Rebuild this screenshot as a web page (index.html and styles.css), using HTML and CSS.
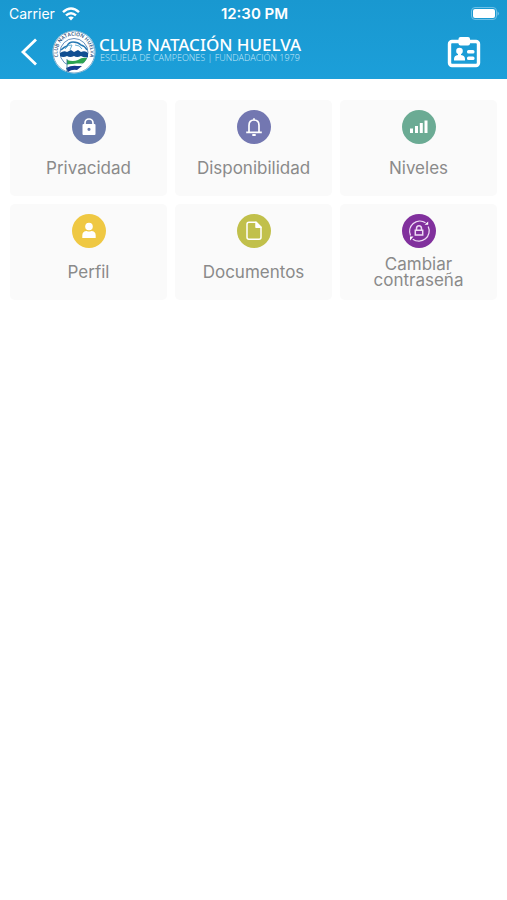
FILE: index.html
```html
<!DOCTYPE html>
<html lang="es">
<head>
<meta charset="utf-8">
<meta name="viewport" content="width=device-width, initial-scale=1">
<title>Club Natación Huelva</title>
<link rel="stylesheet" href="styles.css">
</head>
<body>
<header class="header">
  <div class="status">
    <div class="carrier">
      <span>Carrier</span>
      <svg width="18" height="14" viewBox="0 0 18 14" fill="none" stroke="currentColor" stroke-width="2.5" aria-hidden="true">
        <path d="M1 5.200Q9-2.200 17 5.200M4 8.400q5-4.400 10 0"/>
        <path d="M9 13.400 6.200 10.600q2.800-2.200 5.600 0z" fill="currentColor" stroke="none"/>
      </svg>
    </div>
    <time class="clock">12:30 PM</time>
    <svg class="battery" width="30" height="14" viewBox="0 0 30 14" aria-hidden="true">
      <rect x="1.500" y=".5" width="25" height="12" rx="3.500" fill="none" stroke="#6cc0e6"/>
      <rect x="3" y="2" width="22" height="9" rx="2" fill="#fff"/>
      <path d="M27.500 4.200q3 2.300 0 4.600z" fill="#6cc0e6"/>
    </svg>
  </div>
  <div class="bar">
    <button class="back" type="button" aria-label="Atrás">
      <svg width="18" height="28" viewBox="0 0 18 28" fill="none" stroke="currentColor" stroke-width="2.800" aria-hidden="true"><path d="M16 1.500 3 14l13 12.500"/></svg>
    </button>
    <a class="brand" href="#">
      <svg class="crest" width="44" height="44" viewBox="0 0 44 44" aria-hidden="true">
        <defs><path id="ring" d="M7.200 29.500A16.500 16.500 0 1 1 36.800 29.500"/></defs>
        <circle cx="22" cy="22" r="21.500" fill="#fff"/>
        <circle cx="22" cy="22" r="21" fill="none" stroke="#3a86b8" stroke-width=".7"/>
        <text class="crest-text"><textPath href="#ring" startOffset="50%">CLUB NATACIÓN HUELVA</textPath></text>
        <circle cx="22" cy="22.500" r="14" fill="#fff" stroke="#3d72ac" stroke-width=".8"/>
        <path d="M9 20q3-3 6-4 2-4 6-4 5 0 8 3 4 1 6 5" fill="none" stroke="#2879b3" stroke-width="1.500"/>
        <path d="M13 19q3-5 7-4l-2 5M23 15q5 0 7 4" fill="none" stroke="#67afd4"/>
        <path d="M8 23q4-3 7-1l4-2 3 2 4-2 3 2q4-2 7 1v4q-4 1-7-1-4 2-7 0-4 2-7 0-4 2-7 0z" fill="#124f92"/>
        <path d="M15 30q6 2 11 0 4-3 9-2-2 5-6 6-7-1-14 1z" fill="#2ca350"/>
        <path d="M14 34.500q6 0 11-1l6 0-4 3q-5-1-12 1z" fill="#fff"/>
        <path d="M14 38q6-3 11-2l5 0-5 4q-5-1-9 2z" fill="#173d8f"/>
        <path d="M15 29v13" stroke="#276992" stroke-width=".8"/>
      </svg>
      <span class="names">
        <span class="club">CLUB NATACIÓN HUELVA</span>
        <span class="motto">ESCUELA DE CAMPEONES | FUNDADACIÓN 1979</span>
      </span>
    </a>
    <button class="card-id" type="button" aria-label="Carné">
      <svg width="34" height="32" viewBox="0 0 34 32" fill="currentColor" aria-hidden="true">
        <rect x="2.500" y="5.500" width="29" height="24" rx="2.500" fill="none" stroke="currentColor" stroke-width="3.400"/>
        <rect x="11.500" y="1" width="11.500" height="8.500" rx="2"/>
        <circle cx="12.500" cy="15" r="3.300"/>
        <path d="M11 16h3v3q4 .6 4 4v1.500H7V23q0-3.400 4-4z"/>
        <rect x="20" y="14" width="7.500" height="3.500" rx="1.500"/>
        <rect x="20" y="20.500" width="7.500" height="3.500" rx="1.500"/>
      </svg>
    </button>
  </div>
</header>
<main class="grid">
  <a class="tile" href="#">
    <svg class="icon privacy" viewBox="0 0 34 34" aria-hidden="true">
      <path d="M13 15.500v-2.500a4 4 0 0 1 8 0v2.500" fill="none" stroke="#fff" stroke-width="1.700"/>
      <path fill="#fff" fill-rule="evenodd" d="M11.500 14h11q1 0 1 1v9q0 1-1 1h-11q-1 0-1-1v-9q0-1 1-1zM17 17.700a1.600 1.600 0 1 0 0 3.200 1.600 1.600 0 0 0 0-3.200z"/>
    </svg>
    <span class="label">Privacidad</span>
  </a>
  <a class="tile" href="#">
    <svg class="icon availability" viewBox="0 0 34 34" fill="none" stroke="#fff" stroke-width="1.700" aria-hidden="true">
      <path d="M9.200 22.300h15.600M12 22v-6.500q0-5.500 5-5.500t5 5.500V22M17 10V8.300"/>
      <path d="M15.300 25h3.400" stroke-width="2"/>
    </svg>
    <span class="label">Disponibilidad</span>
  </a>
  <a class="tile" href="#">
    <svg class="icon levels" viewBox="0 0 34 34" fill="#fff" aria-hidden="true">
      <path d="M8 18.500h3V23H8zM13 16h3v7h-3zM17.800 13h3v10h-3zM22.500 10.500h3V23h-3z"/>
    </svg>
    <span class="label">Niveles</span>
  </a>
  <a class="tile" href="#">
    <svg class="icon profile" viewBox="0 0 34 34" fill="#fff" aria-hidden="true">
      <circle cx="17" cy="12.500" r="3.800"/>
      <path d="M10.300 24v-2.500q0-4.500 4.500-4.500 2.200 1.200 4.400 0 4.500 0 4.500 4.500V24z"/>
    </svg>
    <span class="label">Perfil</span>
  </a>
  <a class="tile" href="#">
    <svg class="icon documents" viewBox="0 0 34 34" fill="none" stroke="#fff" stroke-width="1.500" stroke-linejoin="round" aria-hidden="true">
      <path d="M19 8.300h-7q-2 0-2 2v13q0 2 2 2h10q2 0 2-2v-10z"/>
      <path d="M19 8.300v5h5z" fill="#fff"/>
    </svg>
    <span class="label">Documentos</span>
  </a>
  <a class="tile" href="#">
    <svg class="icon password" viewBox="0 0 34 34" fill="none" stroke="#eedbf5" stroke-width="1.300" aria-hidden="true">
      <path d="M8.500 21.500A10.300 10.300 0 0 1 23.500 8.700M26.200 12.500A10.300 10.300 0 0 1 10.800 25.200"/>
      <path d="M22.500 10.800h3.700V7.500zM8 26.500v-4h3.500z" fill="#fff" stroke="none"/>
      <path d="M13.300 16.300h7.400v4.700h-7.400zM14.500 16v-1.500a2.500 2.800 0 0 1 5 0V16" stroke-width="1.500"/>
    </svg>
    <span class="label">Cambiar contraseña</span>
  </a>
</main>
</body>
</html>
```
FILE: styles.css
```css
* {
  box-sizing: border-box;
}

body {
  margin: 0;
  background: #fff;
  color: #8a8a8a;
  font-family: Inter, "Liberation Sans", sans-serif;
}

.header {
  color: #fff;
  background: linear-gradient(#1998d0, #1c9fd9);
  padding-bottom: 3px;
}

.status {
  display: grid;
  grid-template-columns: 1fr auto 1fr;
  align-items: center;
  height: 27px;
  padding: 0 7px 0 9px;
  font-size: 14px;
}

.carrier {
  display: flex;
  align-items: center;
  gap: 7px;
}

.clock {
  font-size: 15px;
  font-weight: 600;
}

.battery {
  justify-self: end;
}

.bar {
  display: flex;
  align-items: center;
  height: 49px;
  padding: 0 26px 0 20px;
}

.back,
.card-id {
  display: flex;
  padding: 0;
  border: 0;
  background: none;
  color: inherit;
}

.brand {
  display: flex;
  align-items: center;
  gap: 3px;
  margin-left: 14px;
  color: inherit;
  text-decoration: none;
}

.crest {
  flex: none;
}

.crest-text {
  font: 600 5px "Open Sans", sans-serif;
  fill: #234a78;
  text-anchor: middle;
}

.names {
  display: flex;
  flex-direction: column;
  padding-bottom: 4px;
  font-family: "Noto Sans", "Open Sans", sans-serif;
  white-space: nowrap;
}

.club {
  font-size: 17px;
  font-weight: 500;
  line-height: 16px;
}

.motto {
  padding-left: 1px;
  color: #c9e9f8;
  font-family: "Open Sans", sans-serif;
  font-size: 9px;
  font-weight: 300;
  line-height: 10px;
}

.card-id {
  margin-left: auto;
}

.grid {
  display: grid;
  grid-template-columns: repeat(3, 1fr);
  grid-auto-rows: 96px;
  gap: 8px;
  padding: 21px 10px;
}

.tile {
  display: flex;
  flex-direction: column;
  align-items: center;
  padding-top: 10px;
  border-radius: 5px;
  background: #fafafa;
  color: inherit;
  text-decoration: none;
}

.icon {
  flex: none;
  width: 34px;
  height: 34px;
  border-radius: 50%;
}

.privacy { background: #6c7dac; }
.availability { background: #7377b1; }
.levels { background: #6bab94; }
.profile { background: #efc843; }
.documents { background: #c1c04b; }
.password { background: #81309d; }

.label {
  display: flex;
  align-items: center;
  height: 48px;
  max-width: 116px;
  font-size: 17px;
  line-height: 16px;
  text-align: center;
}
```
